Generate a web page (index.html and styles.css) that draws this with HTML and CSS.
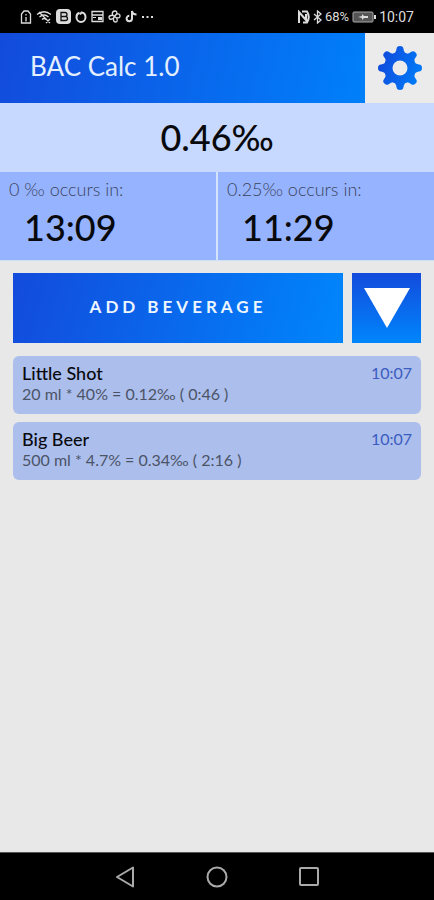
FILE: index.html
```html
<!DOCTYPE html>
<html lang="en">
<head>
<meta charset="utf-8">
<meta name="viewport" content="width=device-width, initial-scale=1">
<title>BAC Calc</title>
<link rel="stylesheet" href="styles.css">
</head>
<body>
<div class="status">
  <div class="status-icons">
    <svg width="12" height="14" viewBox="0 0 12 14"><path d="M1.5 4 4 1h4l2.500 3v9h-9zM6 4v1.500M6 7v4.500" class="line"/></svg>
    <svg width="16" height="14" viewBox="0 0 16 14"><path d="M1 4.500Q8-1 15 4.500M3.500 7Q8 3 12.500 7M6 9.500Q8 7.500 10 9.500M3 2l11 11M10 9l4 4M14 9l-4 4" class="line"/></svg>
    <svg width="15" height="15" viewBox="0 0 15 15"><rect width="15" height="15" rx="4" class="solid"/><path d="M5 3.500h4q2 0 2 2t-2 2H5zm0 4h4.500q2 0 2 2t-2 2H5z" class="dark-line"/></svg>
    <svg width="12" height="14" viewBox="0 0 12 14"><path d="M4.500 2.800C2.500 3.300 1.500 5 1.500 7.200a4.500 4.800 0 0 0 9 0c0-2.700-1.500-4.400-4-4.700L5 4.500" class="line bold"/></svg>
    <svg width="13" height="13" viewBox="0 0 13 13"><path d="M1 1.500h11v10H1zM1 5h11" class="line"/><path d="M7 7h4v3H7zM2 7h3v1H2z" class="solid"/></svg>
    <svg width="13" height="13" viewBox="0 0 13 13"><path d="M6.500 6.500C3 5 4 1 7 1s2 4-.5 5.500C8 3 12 3 12 6s-4 2-5.500.5C10 8 10 12 7.500 12s-2.500-4-1-5.500C5 10 1 10 1 7.500s4-2.500 5.500-1z" class="line"/></svg>
    <svg width="12" height="13" viewBox="0 0 12 13"><path d="M7 8.500a2.700 2.700 0 1 1-2.700-2.700M7 9V1q.5 3.500 4.500 3.500" class="line bold"/></svg>
    <svg width="13" height="13" viewBox="0 0 13 13"><path d="M1 6h2v2H1zM5.500 6h2v2h-2zM10 6h2v2h-2z" class="solid"/></svg>
  </div>
  <div class="status-info">
    <svg width="13" height="14" viewBox="0 0 13 14"><path d="M2 13V2l7 8V4M5 1.500h5q3.500 5.500 0 11H6" class="line bold"/></svg>
    <svg width="9" height="14" viewBox="0 0 9 14"><path d="m1 4 7 6-3.500 3V1L8 4l-7 6" class="line"/></svg>
    <span class="level">68%</span>
    <svg width="24" height="12" viewBox="0 0 24 12"><rect x="1" y="1" width="20" height="10" rx="1" class="cell"/><path d="M22 4h2v4h-2zM6 6l4-1V3l2 2h4v2h-4l-2 2V7z" class="solid"/></svg>
    <time>10:07</time>
  </div>
</div>
<header class="header">
  <h1>BAC Calc 1.0</h1>
  <button class="settings" aria-label="Settings">
    <svg width="44" height="44" viewBox="-22 -22 44 44">
      <defs>
        <linearGradient id="gear" gradientUnits="userSpaceOnUse" x1="-20" y1="-8" x2="20" y2="8"><stop offset="0" stop-color="#104bdc"/><stop offset="1" stop-color="#007bf8"/></linearGradient>
        <path id="tooth" d="M-7-14Q-4-15-3.500-19Q-3.300-22 0-22T3.500-19Q4-15 7-14L4-8H-4z"/>
      </defs>
      <mask id="teeth"><g fill="#fff"><circle r="16"/><use href="#tooth"/><use href="#tooth" transform="rotate(45)"/><use href="#tooth" transform="rotate(90)"/><use href="#tooth" transform="rotate(135)"/><use href="#tooth" transform="rotate(180)"/><use href="#tooth" transform="rotate(225)"/><use href="#tooth" transform="rotate(270)"/><use href="#tooth" transform="rotate(315)"/></g><circle r="7.500" fill="#000"/></mask>
      <rect x="-22" y="-22" width="44" height="44" fill="url(#gear)" mask="url(#teeth)"/>
    </svg>
  </button>
</header>
<main>
  <p class="current">0.46‰</p>
  <section class="forecast">
    <div class="cell-box"><p class="label">0 ‰ occurs in:</p><p class="value">13:09</p></div>
    <div class="cell-box"><p class="label">0.25‰ occurs in:</p><p class="value">11:29</p></div>
  </section>
  <div class="actions">
    <button class="add">ADD BEVERAGE</button>
    <button class="more" aria-label="Choose beverage"><svg width="46" height="40" viewBox="0 0 46 40"><path d="M0 0h46L23 40z" fill="#fff"/></svg></button>
  </div>
  <ul class="drinks">
    <li><div><h2>Little Shot</h2><p>20 ml * 40% = 0.12‰ ( 0:46 )</p></div><time>10:07</time></li>
    <li><div><h2>Big Beer</h2><p>500 ml * 4.7% = 0.34‰ ( 2:16 )</p></div><time>10:07</time></li>
  </ul>
</main>
<nav class="navbar">
  <button aria-label="Back"><svg width="22" height="22" viewBox="0 0 22 22"><path d="M19 1.500v19L3 11z"/></svg></button>
  <button aria-label="Home"><svg width="22" height="22" viewBox="0 0 22 22"><circle cx="11" cy="11" r="9.500"/></svg></button>
  <button aria-label="Recent apps"><svg width="22" height="22" viewBox="0 0 22 22"><rect x="2" y="2" width="18" height="17" rx="1"/></svg></button>
</nav>
</body>
</html>
```
FILE: styles.css
```css
* {
  box-sizing: border-box;
  margin: 0;
  padding: 0;
}

body {
  display: flex;
  flex-direction: column;
  min-height: 100vh;
  background: #e8e8e8;
  color: #08090c;
  font-family: Lato, "Open Sans", sans-serif;
}

button {
  border: 0;
  background: none;
  color: inherit;
  font: inherit;
}

svg {
  display: block;
}

.status {
  display: flex;
  justify-content: space-between;
  align-items: center;
  height: 33px;
  padding: 0 20px;
  background: #000;
  color: #ddd;
  font: 14px/20px Roboto, sans-serif;
}

.status-icons,
.status-info {
  display: flex;
  align-items: center;
  gap: 4px;
}

.status-info {
  gap: 3px;
}

.level {
  font-size: 13px;
}

.line,
.dark-line {
  fill: none;
  stroke: #ddd;
  stroke-width: 1.3;
}

.bold {
  stroke-width: 2;
}

.dark-line {
  stroke: #111;
}

.solid {
  fill: #ddd;
}

.cell {
  fill: #555;
  stroke: #aaa;
}

.header {
  display: flex;
  height: 70px;
}

.header h1 {
  flex: 1;
  padding-left: 30px;
  background: linear-gradient(105deg, #134bdc, #0080fa);
  color: #e4efff;
  font-size: 26px;
  font-weight: 400;
  line-height: 66px;
}

.settings {
  display: grid;
  place-items: center;
  width: 69px;
  background: #ebebeb;
}

main {
  flex: 1;
}

.current {
  background: #c8d9ff;
  font-size: 36px;
  font-weight: 500;
  line-height: 69px;
  text-align: center;
}

.forecast {
  display: grid;
  grid-template-columns: 1fr 1fr;
  gap: 2px;
  border-bottom: 1px solid #cfe0f5;
  background: #d3e2fd;
}

.cell-box {
  height: 88px;
  padding: 5px 9px;
  background: #96b3ff;
}

.label {
  color: #3a445c;
  font-size: 18px;
  font-weight: 300;
  line-height: 24px;
}

.value {
  padding-left: 15px;
  font-size: 36px;
  font-weight: 500;
  line-height: 52px;
}

.actions {
  display: flex;
  gap: 9px;
  padding: 12px 13px 13px;
}

.add {
  flex: 1;
  height: 70px;
  padding-bottom: 4px;
  background: linear-gradient(105deg, #134bdc, #0086fc);
  color: #eef6ff;
  font-size: 17px;
  font-weight: 700;
  letter-spacing: 4px;
}

.more {
  display: grid;
  place-items: center;
  width: 69px;
  background: linear-gradient(#134bdc, #0086fc);
}

.drinks {
  display: grid;
  gap: 8px;
  padding: 0 13px;
  list-style: none;
}

.drinks li {
  display: flex;
  justify-content: space-between;
  height: 58px;
  padding: 7px 9px;
  border-radius: 6px;
  background: #acbeec;
}

.drinks h2 {
  font-size: 18px;
  font-weight: 500;
  line-height: 21px;
}

.drinks p {
  color: #4b5467;
  font-size: 16px;
  line-height: 20px;
}

.drinks time {
  color: #3b5cc0;
  font-size: 16px;
  line-height: 20px;
}

.navbar {
  display: flex;
  justify-content: center;
  align-items: center;
  gap: 70px;
  height: 48px;
  border-top: 1px solid #555;
  background: #000;
}

.navbar svg {
  fill: none;
  stroke: #aaa;
  stroke-width: 2;
  stroke-linejoin: round;
}
```
